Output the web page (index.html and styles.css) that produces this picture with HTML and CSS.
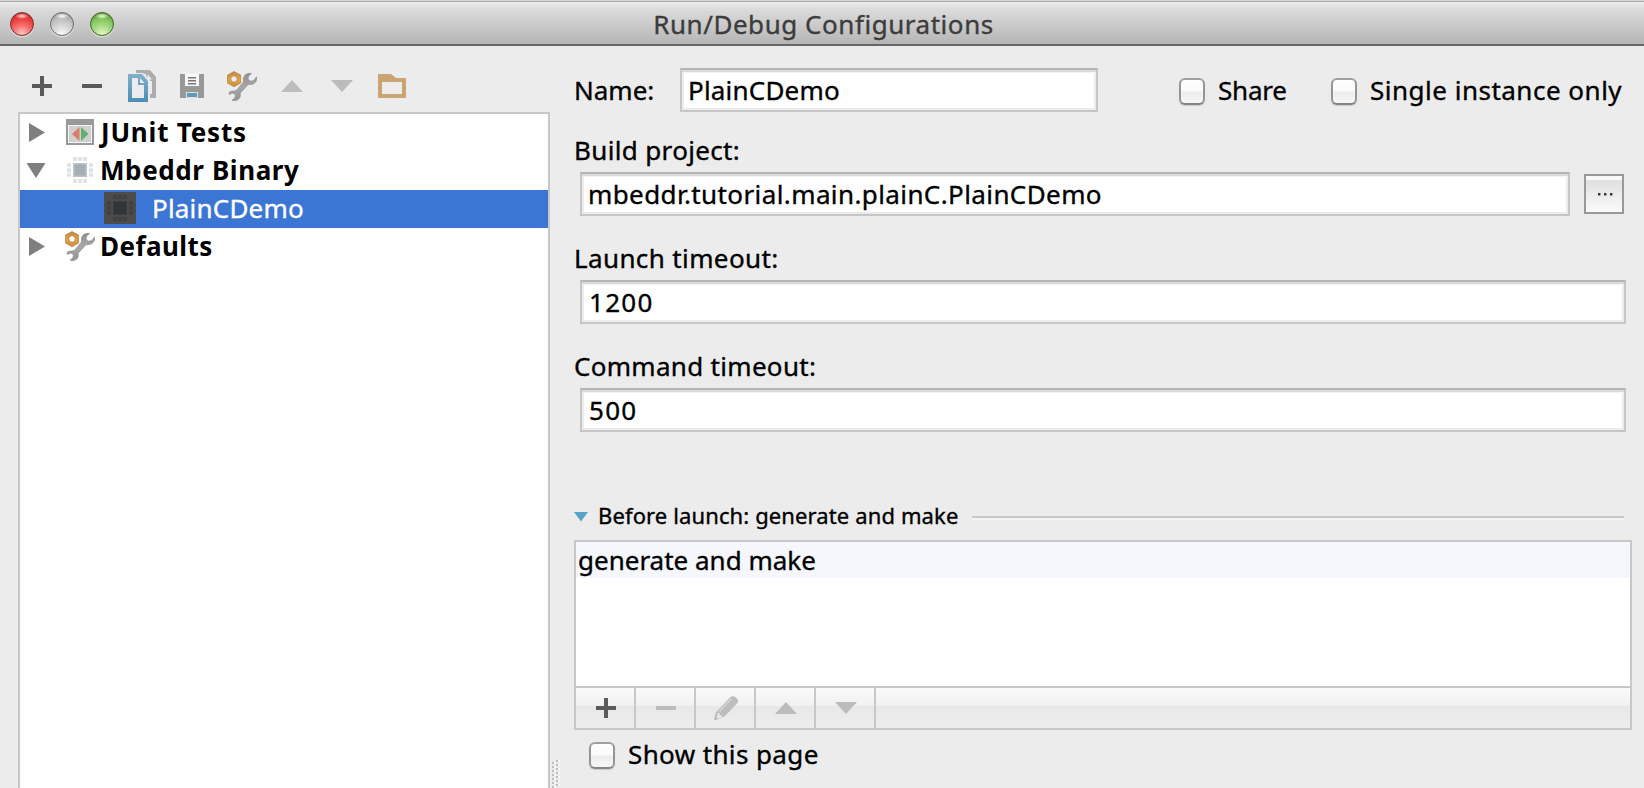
FILE: index.html
```html
<!DOCTYPE html>
<html lang="en">
<head>
<meta charset="utf-8">
<title>Run/Debug Configurations</title>
<link rel="stylesheet" href="styles.css">
</head>
<body>
<svg class="defs" width="0" height="0">
  <defs>
    <linearGradient id="gold" x1="0" y1="0" x2="0" y2="1"><stop offset="0" stop-color="#c08a45"/><stop offset=".55" stop-color="#e0a24a"/><stop offset="1" stop-color="#c98a3c"/></linearGradient>
    <linearGradient id="page" x1="0" y1="0" x2="0" y2="1"><stop offset="0" stop-color="#7fb0cb"/><stop offset="1" stop-color="#4d8db5"/></linearGradient>
    <linearGradient id="steel" x1="0" y1="0" x2="0" y2="1"><stop offset="0" stop-color="#8f8f8f"/><stop offset=".5" stop-color="#a9a9a9"/><stop offset="1" stop-color="#939393"/></linearGradient>
    <symbol id="tools" viewBox="0 0 30 30">
      <path fill="url(#steel)" stroke="#8a8a8a" stroke-width=".6" d="M24.500 2.500 C21 1.800 17.500 3.300 16.600 6.500 C16.100 8.300 16.700 10 16.200 11.300 L9.500 19.300 C8 20.600 5 19.400 2.300 21 L2.200 23.500 L6 22 L8.500 24 L7.800 27 L5 29.300 C9 30.500 13 28.500 13.400 24.500 L13.200 22.200 L20.500 14.200 C22 12.800 24 14.200 26.500 12.800 C29 11.500 30.200 8.500 29.700 5.800 L26.500 9.700 L22.800 10.200 L21 7.500 L21.800 4.900 Z"/>
      <path fill="url(#gold)" stroke="#b98845" stroke-width=".8" fill-rule="evenodd" d="M7 .6 L13.600 4 V12 L7 15.700 L.5 12 V4 Z M7 4.800 A3.200 3.200 0 1 0 7 11.200 A3.200 3.200 0 1 0 7 4.800 Z"/>
    </symbol>
    <symbol id="chip" viewBox="0 0 32 32">
      <g class="chip-pins">
        <path d="M9 3h14v4H9zM9 25h14v4H9zM3 9h4v14H3zM25 9h4v14h-4z" opacity=".4"/>
        <path d="M9.500 3h3v4h-3zM14.500 3h3v4h-3zM19.500 3h3v4h-3zM9.500 25h3v4h-3zM14.500 25h3v4h-3zM19.500 25h3v4h-3zM3 9.500h4v3H3zM3 14.500h4v3H3zM3 19.500h4v3H3zM25 9.500h4v3h-4zM25 14.500h4v3h-4zM25 19.500h4v3h-4z"/>
      </g>
      <path class="chip-rim" d="M9 9h14v14H9z"/>
      <path class="chip-core" d="M10.500 10.500h11v11h-11z"/>
    </symbol>
  </defs>
</svg>
<div class="window">
  <header class="titlebar">
    <div class="lights"><i class="light red"></i><i class="light gray"></i><i class="light green"></i></div>
    <h1 class="title">Run/Debug Configurations</h1>
  </header>
  <div class="content">
    <aside class="sidebar">
      <div class="toolbar">
        <svg class="tool" width="50" height="40"><path fill="#5a5a5a" d="M20 10h4v8h8v4h-8v8h-4v-8h-8v-4h8z"/></svg>
        <svg class="tool" width="50" height="40"><path fill="#5a5a5a" d="M12 18h20v4H12z"/></svg>
        <svg class="tool" width="50" height="40"><path fill="#adadad" d="M16 4h14l6 7v21h-7v-4h3V15h-6V8H16z"/><path fill="#ececec" d="M27.500 8l4.500 5.500h-4.500z"/><path fill="#ececec" d="M8 7h15l7 7v19H8z"/><path fill="url(#page)" d="M8 8h14l6 7v21H8zM12 12v20h12V19h-6v-7z" fill-rule="evenodd"/><path fill="#ececec" d="M20 12l4.500 5H20z"/></svg>
        <svg class="tool" width="50" height="40"><path fill="#999" d="M10 8h24v24H10z"/><path fill="#f7f7f7" d="M15 8h14v12H15z"/><path fill="#777" d="M18 11h8v1.400h-8zM18 14h8v1.400h-8zM18 17h8v1.400h-8z"/><path fill="#ddd" d="M16 26h12v6H16z"/><path fill="#5b9cc0" d="M17 27h10v4H17z"/></svg>
        <svg class="tool" width="50" height="40"><use href="#tools" x="7" y="5" width="30" height="30"/></svg>
        <svg class="tool" width="50" height="40"><path fill="#bcbcbc" d="M22 14l11 12H11z"/></svg>
        <svg class="tool" width="50" height="40"><path fill="#bcbcbc" d="M11 14h22L22 26z"/></svg>
        <svg class="tool" width="50" height="40"><path fill="#c8a573" fill-rule="evenodd" d="M8 8h13l5 4h10v20H8zM12 16v12h20V16z"/></svg>
      </div>
      <div class="tree">
        <div class="row"><svg width="80" height="38"><path fill="#7f7f7f" d="M9 9l16 9.500L9 28z"/><path fill="#999" d="M46 5h28v26H46z"/><path fill="#f4f4f4" d="M48 11h24v18H48z"/><path fill="#d0d0d0" d="M49 12h22v16H49z"/><path fill="#dc7c6c" d="M59.500 13v14L52 20z"/><path fill="#5fb36c" d="M61 13v14l7.500-7z"/></svg><b class="t-junit">JUnit Tests</b></div>
        <div class="row"><svg class="chip-light" width="80" height="38"><path fill="#7f7f7f" d="M6.500 11h19L16 26z"/><use href="#chip" x="44" y="2" width="32" height="32"/></svg><b class="t-binary">Mbeddr Binary</b></div>
        <div class="row selected"><svg class="chip-dark" width="132" height="38"><path fill="#4b4b4b" d="M84 2h32v32H84z"/><use href="#chip" x="84" y="2" width="32" height="32"/></svg><span class="t-demo">PlainCDemo</span></div>
        <div class="row"><svg width="80" height="38"><path fill="#7f7f7f" d="M9 9l16 9.500L9 28z"/><use href="#tools" x="45" y="3" width="30" height="30"/></svg><b class="t-defaults">Defaults</b></div>
      </div>
    </aside>
    <main class="form">
      <svg class="grip" width="10" height="28"><defs><pattern id="dots" width="8" height="4" patternUnits="userSpaceOnUse"><path fill="#fafafa" d="M2 2h2v2H2zM6 0h2v2H6z"/><path fill="#bdbdbd" d="M0 2h2v2H0zM4 0h2v2H4z"/></pattern></defs><path fill="url(#dots)" d="M0 0h8v28H0z"/></svg>
      <div class="name-row">
        <label class="label t-name">Name:</label>
        <div class="field name t-demo">PlainCDemo</div>
        <div class="check share"><i class="box"></i><span class="t-share">Share</span></div>
        <div class="check single"><i class="box"></i><span class="t-single">Single instance only</span></div>
      </div>
      <div class="group">
        <label class="label t-build">Build project:</label>
        <div class="field-row"><div class="field path">mbeddr.tutorial.main.plainC.PlainCDemo</div><div class="browse"><svg width="34" height="34"><path fill="#333" d="M11 16h2.400v2.400H11zM17 16h2.400v2.400H17zM23 16h2.400v2.400H23z"/></svg></div></div>
      </div>
      <div class="group">
        <label class="label t-launch">Launch timeout:</label>
        <div class="field-row"><div class="field number">1200</div></div>
      </div>
      <div class="group">
        <label class="label t-command">Command timeout:</label>
        <div class="field-row"><div class="field number">500</div></div>
      </div>
      <div class="before">
        <svg width="26" height="32"><path fill="#57a3ca" d="M0 12h14L7 21.500z"/></svg>
        <span class="before-title">Before launch: generate and make</span>
        <i class="rule"></i>
      </div>
      <section class="tasks">
        <div class="task-list"><div class="task">generate and make</div></div>
        <div class="task-bar">
          <div class="cell"><svg width="58" height="40"><path fill="#5a5a5a" d="M28 10h4v8h8v4h-8v8h-4v-8h-8v-4h8z"/></svg></div>
          <div class="cell"><svg width="58" height="40"><path fill="#bcbcbc" d="M20 18h20v4H20z"/></svg></div>
          <div class="cell"><svg width="58" height="40"><path fill="#bdbdbd" d="M34 9.500q2-2 4.500-1t3.500 3.500q.5 2-1 3.500L28.500 28.500 20 32h-2l1.500-7z"/><path fill="#e6e6e6" d="M21.500 25.500l1.500-1 1 2.500 2.500 1-1 1.500-4 1.200-.8-.8z"/><path stroke="#d4d4d4" stroke-width="1.500" d="M23.500 23.500l12-13"/></svg></div>
          <div class="cell"><svg width="58" height="40"><path fill="#bcbcbc" d="M30 14l11 12H19z"/></svg></div>
          <div class="cell"><svg width="58" height="40"><path fill="#bcbcbc" d="M19 14h22L30 26z"/></svg></div>
        </div>
      </section>
      <div class="check show"><i class="box"></i><span class="t-show">Show this page</span></div>
    </main>
  </div>
</div>
</body>
</html>
```
FILE: styles.css
```css
* { box-sizing: border-box; }
body {
  margin: 0;
  background: #ececec;
  color: #000;
  font: 26px/36px "Noto Sans", "Open Sans", sans-serif;
  -webkit-text-stroke: .35px currentColor;
  overflow: hidden;
}
b { -webkit-text-stroke: 0; }
svg { display: block; flex: none; }
.defs { position: absolute; }
.window { display: flex; flex-direction: column; width: 1644px; height: 788px; }

.titlebar {
  display: grid;
  grid-template-columns: 1fr auto 1fr;
  height: 46px;
  flex: none;
  border-top: 1px solid #d6d6d6;
  border-bottom: 2px solid #676767;
  background: linear-gradient(#a8a8a8 0 1px, #ededed 1px, #dedede 6px, #b5b5b5 100%);
}
.title {
  margin: 0;
  padding-left: 3px;
  font-size: 26px;
  font-weight: 400;
  line-height: 46px;
  letter-spacing: .54px;
  color: #3c3c3c;
}
.lights { display: flex; gap: 16px; padding: 11px 0 0 10px; }
.light {
  width: 24px;
  height: 24px;
  border-radius: 50%;
  box-shadow: 0 1px 1px rgba(255, 255, 255, .7);
}
.red { border: 1px solid #7d2a28; background: radial-gradient(ellipse 7px 3px at 50% 14%, #ffd9d7, transparent), radial-gradient(circle at 50% 95%, #ffc9c2 0, #f4696a 40%, #ee3e3e 65%, #a82424 100%); }
.gray { border: 1px solid #6e6e6e; background: radial-gradient(ellipse 7px 3px at 50% 14%, #fff, transparent), radial-gradient(circle at 50% 95%, #fafafa 0, #d4d4d4 40%, #bdbdbd 65%, #888 100%); }
.green { border: 1px solid #3f6426; background: radial-gradient(ellipse 7px 3px at 50% 14%, #f0ffe6, transparent), radial-gradient(circle at 50% 95%, #e3f8c4 0, #a3d880 40%, #80c45c 65%, #4a7a2c 100%); }

.content { display: flex; flex: 1; min-height: 0; }
.sidebar { display: flex; flex-direction: column; width: 550px; padding-left: 18px; }
.toolbar { display: flex; height: 66px; padding: 20px 0 0 2px; }
.tree { flex: 1; border: 2px solid #c8c8c8; border-bottom: 0; background: #fff; }
.row { display: flex; height: 38px; }
.selected { background: #3c76d4; color: #fff; }
.chip-light { --pin: #dfe2e5; --rim: #bcc3cb; --core: #a5adb7; }
.chip-dark { --pin: #3e3f40; --rim: #3a3b3c; --core: #313335; }
.chip-pins { fill: var(--pin); }
.chip-rim { fill: var(--rim); }
.chip-core { fill: var(--core); }
.t-junit { letter-spacing: .8px; padding-left: 1px; }
.t-binary { letter-spacing: .6px; }
.t-defaults { letter-spacing: .45px; }
.t-demo { letter-spacing: .2px; }
.t-command { letter-spacing: .3px; }
.t-build { letter-spacing: .35px; }
.t-launch { letter-spacing: .38px; }
.t-share { letter-spacing: -.2px; }
.t-single { letter-spacing: .5px; }
.t-show { letter-spacing: .38px; }

.form { position: relative; display: flex; flex-direction: column; flex: 1; padding: 22px 12px 0 24px; }
.grip { position: absolute; left: 2px; bottom: 0; }
.label { display: block; }
.name-row { display: flex; height: 44px; line-height: 44px; margin-bottom: 20px; }
.name-row .label { width: 106px; }
.field {
  flex: 1;
  height: 44px;
  padding-left: 4px;
  line-height: 40px;
  background: #fff;
  border: 2px solid #c6c6c6;
  border-top-color: #b5b5b5;
  box-shadow: inset 0 2px 0 #dadada, inset 0 3px 0 #f3f3f3, inset 2px 0 0 #ececec, inset -2px 0 0 #ececec, inset 0 -2px 0 #ececec;
}
.name { flex: none; width: 418px; padding-left: 6px; }
.path { padding-left: 6px; letter-spacing: .4px; }
.number { padding-left: 7px; letter-spacing: 1.3px; }
.group { margin-bottom: 24px; }
.field-row { display: flex; align-items: center; gap: 14px; padding: 4px 6px 0; }
.browse {
  width: 40px;
  height: 40px;
  margin-right: 2px;
  padding: 1px;
  border: 2px solid #999;
  background: linear-gradient(#f8f8f8 0 4px, #e0e0e0 4px, #fafafa 100%);
}
.check { display: flex; }
.box {
  width: 26px;
  height: 27px;
  border: 2px solid #959595;
  border-color: #a0a0a0 #959595 #858585;
  border-radius: 6px;
  background: linear-gradient(#fff 0, #fafafa 48%, #ededed 52%, #f6f6f6 100%);
  box-shadow: 0 1px 1px rgba(0, 0, 0, .15);
}
.name-row .box { margin-top: 10px; }
.share { margin-left: 81px; gap: 13px; width: 152px; }
.single { gap: 13px; white-space: nowrap; }

.before { display: flex; height: 32px; margin: 44px 8px 8px 0; align-items: flex-start; }
.before-title { margin-left: -2px; font-size: 22px; line-height: 30px; letter-spacing: .12px; white-space: nowrap; }
.rule { flex: 1; height: 4px; margin: 16px 0 0 14px; border-top: 2px solid #c8c8c8; background: #f4f4f4; }
.tasks { height: 190px; border: 2px solid #c8c8c8; flex: none; }
.task-list { height: 144px; background: #fff; }
.task { height: 36px; padding-left: 2px; background: #f5f7fc; }
.task-bar {
  display: flex;
  height: 42px;
  border-top: 2px solid #c8c8c8;
  background: linear-gradient(#fafafa 0, #f1f1f1 18px, #e8e8e8 18px, #ededed 100%);
}
.cell { width: 60px; border-right: 2px solid #c8c8c8; }
.show { padding: 6px 0 0 15px; gap: 13px; }
.show .box { margin: 6px 0 -1px; }
```
